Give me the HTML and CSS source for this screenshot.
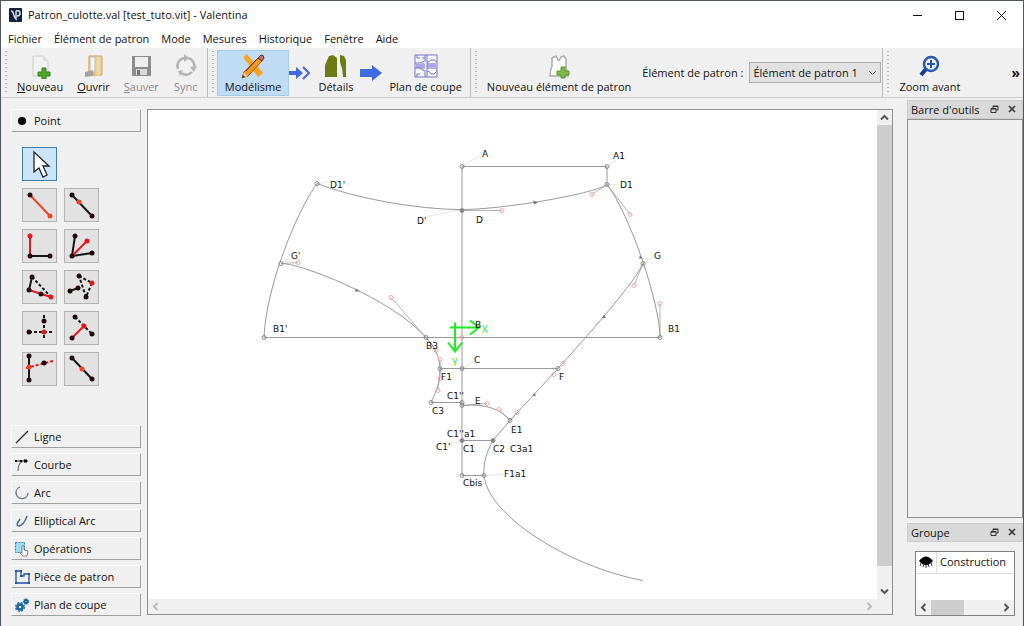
FILE: index.html
```html
<!DOCTYPE html>
<html lang="fr">
<head>
<meta charset="utf-8">
<title>Patron_culotte.val [test_tuto.vit] - Valentina</title>
<link rel="stylesheet" href="styles.css">
</head>
<body class="window">
<header class="titlebar">
  <svg class="app-icon" width="13" height="14" viewBox="0 0 13 14"><rect width="13" height="14" rx="1" fill="#14213d"/><path d="M2 3q2 0 2.500 3t2.500 5V3M7 3q4-1 4 2t-3 3" fill="none" stroke="#dce2ee" stroke-width="1.500"/></svg>
  <h1 class="title">Patron_culotte.val [test_tuto.vit] - Valentina</h1>
  <button class="win-btn" aria-label="Réduire"><svg width="11" height="11"><path d="M1 5.500h9" stroke="#111"/></svg></button>
  <button class="win-btn" aria-label="Agrandir"><svg width="11" height="11"><rect x="1.500" y="1.500" width="8" height="8" fill="none" stroke="#111"/></svg></button>
  <button class="win-btn" aria-label="Fermer"><svg width="11" height="11"><path d="M1 1l9 9M10 1l-9 9" stroke="#111"/></svg></button>
</header>
<nav class="menubar">
  <button>Fichier</button><button>Élément de patron</button><button>Mode</button><button>Mesures</button><button>Historique</button><button>Fenêtre</button><button>Aide</button>
</nav>
<div class="toolbar">
  <div class="group">
    <i class="grip"></i>
    <button class="tool"><svg width="26" height="26" viewBox="0 0 26 26"><path d="M6 3h10l5 5v15H6z" fill="#f1f1f1" stroke="#ccc"/><path d="M16 3v5h5z" fill="#ddd"/><path d="M15 15h4v4h4v4h-4v3h-4v-3h-4v-4h4z" fill="#4fa62b" stroke="#328119"/></svg><span><u>N</u>ouveau</span></button>
    <button class="tool"><svg width="26" height="26" viewBox="0 0 26 26"><path d="M9 3h13v19H9z" fill="#ecd199" stroke="#c9a562"/><path d="M8 4l7 3v17l-7-4z" fill="#e7bd70"/><path d="M10 4h5v15h-5z" fill="#f4f4f4" stroke="#bbb"/><path d="M5 19l8-2v6l-8 1z" fill="#a4a4a4"/><path d="M17 5l3-1v17l-3 3z" fill="#efd8a9"/></svg><span><u>O</u>uvrir</span></button>
    <button class="tool" disabled><svg width="26" height="26" viewBox="0 0 26 26"><path d="M4 3h19v20H4z" fill="#8c8c8c"/><path d="M7 4h13v10H7z" fill="#eee"/><path d="M8 16h11v6H8z" fill="#d9d9d9"/><path d="M9 17h3v5H9z" fill="#777"/></svg><span><u>S</u>auver</span></button>
    <button class="tool" disabled><svg width="26" height="26" viewBox="0 0 26 26"><path d="M5 16A8 8 0 0 1 12 5M15 5a8 8 0 0 1 6 10M19 19a8 8 0 0 1-11 1" fill="none" stroke="#b4b4b4" stroke-width="2.500"/><path d="M11 1l5 4-5 4zM24 13l-3 6-4-5zM10 17l-5 1 2 5z" fill="#b4b4b4"/></svg><span>Sync</span></button>
  </div>
  <div class="group">
    <i class="grip"></i>
    <button class="tool active"><svg width="26" height="26" viewBox="0 0 26 26"><path d="M3 4l4-3 16 19-5 4z" fill="#f6a51c"/><path d="M18 5l4 3L8 23l-6 2 2-6z" fill="#f49a16" stroke="#a85713"/><path d="M6 18L19 4" stroke="#553528" stroke-width="1"/><path d="M4 19l4 4-6 2z" fill="#e9c9a0"/><path d="M2 25l1-3 2 2z" fill="#222"/><path d="M18 5l3-3q3 0 3 3l-2 3z" fill="#d86573" stroke="#553528"/></svg><span>Modélisme</span></button>
    <svg class="step" width="22" height="16" viewBox="0 0 22 16"><path d="M0 6h7V2l7 6-7 6v-4H0z" fill="#4169e1"/><path d="M14 2l6 6-6 6" fill="none" stroke="#4169e1" stroke-width="2"/></svg>
    <button class="tool"><svg width="26" height="26" viewBox="0 0 26 26"><path d="M2 24V12l4-9 4-1 4 3v19zM17 2l4 1 2 4v17h-3q0-8-3-15z" fill="#6c7b16"/></svg><span>Détails</span></button>
    <svg class="step" width="22" height="16" viewBox="0 0 22 16"><path d="M0 4h12V0l10 8-10 8v-4H0z" fill="#4169e1"/></svg>
    <button class="tool"><svg width="26" height="26" viewBox="0 0 26 26"><path d="M2 2h22v22H2z" fill="#f7f7ff" stroke="#7775c5"/><path d="M3 11h5q2-3 4 0v4q-2 3-4 0H3zM14 10h9v4h-9z" fill="#aaa9e8"/><path d="M12 2v7M14 2v22M12 17v7M2 10h5l4-2M2 15h5l4 3M14 9q3 0 4-2h3l3 2M14 15h10M14 18q3 0 4 3h3l3-3M4 2v3h3M9 5h3M4 24v-3h3" fill="none" stroke="#7775c5"/></svg><span>Plan de coupe</span></button>
  </div>
  <div class="group">
    <i class="grip"></i>
    <button class="tool"><svg width="26" height="26" viewBox="0 0 26 26"><path d="M4 23q0-6 2-10V5l4-2 2 4q1 2 3-3l3-1 2 3v9l2 8z" fill="#fff" stroke="#aaa" stroke-width="1.500"/><path d="M15 14h4v4h4v4h-4v3h-4v-3h-4v-4h4z" fill="#83b84a" stroke="#5f962b"/></svg><span>Nouveau élément de patron</span></button>
    <label class="piece-label" for="piece">Élément de patron :</label>
    <span class="select-wrap"><select id="piece"><option>Élément de patron 1</option></select><svg width="9" height="6"><path d="M1 1l3.500 3.500L8 1" fill="none" stroke="#666"/></svg></span>
  </div>
  <div class="group last">
    <i class="grip"></i>
    <button class="tool"><svg width="26" height="26" viewBox="0 0 26 26"><path d="M9 16l-5 6" stroke="#163b8c" stroke-width="4"/><circle cx="14" cy="11" r="7" fill="#eef5ff" stroke="#2555ad" stroke-width="2.500"/><path d="M14 7v8M10 11h8" stroke="#2555ad" stroke-width="2"/></svg><span>Zoom avant</span></button>
    <button class="more" aria-label="Plus">»</button>
  </div>
</div>
<main class="workspace">
  <aside class="palette">
    <button class="section"><svg width="16" height="16"><circle cx="8" cy="8" r="4" fill="#000"/></svg>Point</button>
    <div class="tools">
      <button class="cell picked" aria-label="Sélection"><svg width="32" height="32"><path d="M10 4v20l5-4 4 9 4-2-4-9h6z" fill="#fff" stroke="#222" stroke-width="1.300"/></svg></button>
      <button class="cell row-start" aria-label="Point à distance"><svg width="32" height="32"><path d="M6 6l20 21" class="r o"/><circle cx="6" cy="6" r="2.500"/><circle cx="26" cy="27" r="2.500" class="o"/></svg></button>
      <button class="cell" aria-label="Point sur ligne"><svg width="32" height="32"><path d="M6 6l20 21" class="k"/><circle cx="6" cy="6" r="2.500"/><circle cx="26" cy="27" r="2.500"/><circle cx="13" cy="13" r="2.500" class="o"/></svg></button>
      <button class="cell" aria-label="Perpendiculaire"><svg width="32" height="32"><path d="M6 26V6" class="r"/><path d="M6 26h20" class="k"/><circle cx="6" cy="6" r="2.500" class="d"/><circle cx="6" cy="26" r="2.500"/><circle cx="26" cy="26" r="2.500"/></svg></button>
      <button class="cell" aria-label="Bissectrice"><svg width="32" height="32"><path d="M9 6L6 26l20-3" class="k"/><path d="M6 26l15-15" class="r"/><circle cx="9" cy="6" r="2.500"/><circle cx="6" cy="26" r="2.500"/><circle cx="26" cy="23" r="2.500"/><circle cx="21" cy="11" r="2.500" class="d"/></svg></button>
      <button class="cell" aria-label="Épaule"><svg width="32" height="32"><path d="M8 6L5 19" class="k"/><path d="M5 19l22 7" class="r"/><path d="M8 6l19 20" class="k dash"/><circle cx="8" cy="6" r="2.500"/><circle cx="5" cy="19" r="2.500"/><circle cx="17" cy="23" r="2.500"/><circle cx="27" cy="26" r="2.500" class="d"/></svg></button>
      <button class="cell" aria-label="Triangle"><svg width="32" height="32"><path d="M4 20l8-3" class="k"/><path d="M13 5l13 7-6 14z" class="k dash"/><circle cx="4" cy="20" r="2.500"/><circle cx="12" cy="17" r="2.500"/><circle cx="13" cy="5" r="2.500"/><circle cx="20" cy="26" r="2.500"/><circle cx="26" cy="12" r="2.500" class="d"/></svg></button>
      <button class="cell" aria-label="Intersection XY"><svg width="32" height="32"><path d="M5 20h23M20 3v24" class="k dash"/><circle cx="20" cy="9" r="2.500"/><circle cx="5" cy="20" r="2.500"/><circle cx="20" cy="20" r="2.500" class="d"/></svg></button>
      <button class="cell" aria-label="Hauteur"><svg width="32" height="32"><path d="M9 5l17 17" class="k dash"/><path d="M6 26l12-12" class="r"/><circle cx="9" cy="5" r="2.500"/><circle cx="6" cy="26" r="2.500"/><circle cx="26" cy="22" r="2.500"/><circle cx="18" cy="14" r="2.500" class="d"/></svg></button>
      <button class="cell" aria-label="Intersection avec axe"><svg width="32" height="32"><path d="M5 3v24" class="k"/><path d="M2 15l27-7" class="r dash"/><circle cx="5" cy="3" r="2.500"/><circle cx="5" cy="27" r="2.500"/><circle cx="20" cy="10" r="2.500"/><circle cx="5" cy="14" r="2.500" class="o"/></svg></button>
      <button class="cell" aria-label="Milieu"><svg width="32" height="32"><path d="M6 5l20 21" class="k"/><circle cx="6" cy="5" r="2.500"/><circle cx="26" cy="26" r="2.500"/><circle cx="16" cy="16" r="2.500" class="o"/></svg></button>
    </div>
    <div class="sections">
      <button class="section"><svg width="16" height="16"><path d="M2 14L14 2" stroke="#222" stroke-width="1.300"/></svg>Ligne</button>
      <button class="section"><svg width="16" height="16"><path d="M1 4h13" stroke="#111"/><path d="M4 14q0-8 5-10" fill="none" stroke="#667" stroke-width="1.200"/><path d="M1 3h2v2H1zM10 2.500h3v3h-3zM6 3h2v2H6z"/></svg>Courbe</button>
      <button class="section"><svg width="16" height="16"><path d="M6 2a6 6 0 1 0 8 6" fill="none" stroke="#667085" stroke-width="1.300"/></svg>Arc</button>
      <button class="section"><svg width="16" height="16"><path d="M6 6q-5 7-1 7 5-1 8-10" fill="none" stroke="#53699a" stroke-width="1.500"/></svg>Elliptical Arc</button>
      <button class="section"><svg width="16" height="16"><rect x="1.500" y="1.500" width="9" height="10" fill="#9ddcf2" stroke="#38a" stroke-dasharray="2 1"/><path d="M8 5v7l-1-1-1 1 3 3h4l1-5-4-1V5z" fill="#fff" stroke="#666" stroke-width=".8"/></svg>Opérations</button>
      <button class="section"><svg width="16" height="16"><path d="M2 2h5v5h3V5h5v9H2z" fill="#eef4ff" stroke="#234d9d" stroke-width="1.300"/><path d="M1 1h2v2H1zM6 1h2v2H6zM6 6h2v2H6zM14 4h2v2h-2zM14 13h2v2h-2zM1 13h2v2H1z" fill="#234d9d"/></svg>Pièce de patron</button>
      <button class="section"><svg width="16" height="16"><circle cx="6" cy="10" r="2.500" fill="none" stroke="#17659a" stroke-width="2.500"/><circle cx="6" cy="10" r="4.300" fill="none" stroke="#17659a" stroke-width="1.300" stroke-dasharray="2 1.400"/><circle cx="12" cy="4.500" r="1.500" fill="none" stroke="#17659a" stroke-width="2"/><circle cx="12" cy="4.500" r="2.800" fill="none" stroke="#17659a" stroke-dasharray="1.500 1"/></svg>Plan de coupe</button>
    </div>
  </aside>
  <section class="canvas">
    <svg class="drawing" viewBox="148 110 729 488" preserveAspectRatio="xMidYMid meet">
      <g class="leader"><path d="M462 166l18-11M607 166l9-7M607 184h12M317 183l11-1M281 263l8-6M264 337l7-7M462 209l-35 7M643 263l9-6M660 337l7-7M462 368l11-7M462 440l-14 4M484 475l20-1"/></g>
      <g class="handle"><path d="M462 210h40M607 184l-15 10M607 184l23 30M643 263l-9 22M660 337v-34M281 263l17-1M426 337l-35-40M426 337l10 13M440 368v-9M440 368l-2 22M462 405l25-2M510 420l-11-11M510 420l7-8"/></g>
      <g class="geom"><path d="M462 166v309M462 166h145v18M264 337h396M440 368h118M431 402h31M462 440h31M462 475h22"/>
      <path d="M317 183C353 197 415 209 462 209C502 209 592 194 607 184C630 214 660 303 660 337"/>
      <path d="M317 183C296 212 266 287 264 337M281 263C298 262 391 297 426 337C434 345 440 357 440 368C441 380 436 391 431 402"/>
      <path d="M643 263C634 285 563 362 558 368L510 420L493 440C487 450 483 463 484 475C488 515 568 566 643 580"/>
      <path d="M462 405C485 403 500 408 510 420"/></g>
      <g class="arrow"><path d="M538 202l-5-2 1 4zM643 258l-3-3-1 3zM602 318l4-1-2-3zM360 291l-4-3-1 3zM533 396l3-1-2-3z"/></g>
      <g class="node"><circle cx="462" cy="166" r="2"/><circle cx="607" cy="166" r="2"/><circle cx="607" cy="184" r="2"/><circle cx="317" cy="183" r="2"/><circle cx="281" cy="263" r="2"/><circle cx="264" cy="337" r="2"/><circle cx="426" cy="337" r="2"/><circle cx="462" cy="210" r="2" class="solid"/><circle cx="643" cy="263" r="2"/><circle cx="660" cy="337" r="2"/><circle cx="440" cy="368" r="2"/><circle cx="462" cy="368" r="2"/><circle cx="558" cy="368" r="2"/><circle cx="431" cy="402" r="2"/><circle cx="462" cy="402" r="2"/><circle cx="462" cy="405" r="2"/><circle cx="510" cy="420" r="2"/><circle cx="462" cy="440" r="2" class="solid"/><circle cx="493" cy="440" r="2" class="solid"/><circle cx="462" cy="475" r="2"/><circle cx="484" cy="475" r="2"/></g>
      <g class="control"><circle cx="462" cy="337" r="2"/><circle cx="502" cy="210" r="2"/><circle cx="592" cy="194" r="2"/><circle cx="630" cy="214" r="2"/><circle cx="634" cy="285" r="2"/><circle cx="660" cy="303" r="2"/><circle cx="298" cy="262" r="2"/><circle cx="391" cy="297" r="2"/><circle cx="436" cy="350" r="2"/><circle cx="440" cy="359" r="2"/><circle cx="440" cy="378" r="2"/><circle cx="438" cy="390" r="2"/><circle cx="563" cy="363" r="2"/><circle cx="554" cy="374" r="2"/><circle cx="487" cy="403" r="2"/><circle cx="499" cy="409" r="2"/><circle cx="517" cy="412" r="2"/></g>
      <g class="axes"><path d="M450 327h29M470 320l9 7-9 7M455 322v29M448 342l7 9 7-9"/><text x="482" y="332">X</text><text x="452" y="365">Y</text></g>
      <g class="names"><text x="482" y="156">A</text><text x="613" y="158">A1</text><text x="620" y="187">D1</text><text x="330" y="187">D1'</text><text x="476" y="222">D</text><text x="417" y="223">D'</text><text x="291" y="258">G'</text><text x="654" y="258">G</text><text x="273" y="331">B1'</text><text x="668" y="331">B1</text><text x="475" y="327">B</text><text x="426" y="348">B3</text><text x="474" y="362">C</text><text x="441" y="379">F1</text><text x="559" y="379">F</text><text x="447" y="398">C1''</text><text x="475" y="403">E</text><text x="432" y="413">C3</text><text x="447" y="436">C1''a1</text><text x="511" y="432">E1</text><text x="436" y="449">C1'</text><text x="463" y="451">C1</text><text x="493" y="451">C2</text><text x="510" y="451">C3a1</text><text x="504" y="476">F1a1</text><text x="463" y="485">Cbis</text></g>
    </svg>
    <div class="vscroll"><button aria-label="Défiler vers le haut"><svg width="9" height="7"><path d="M1 5.500l3.500-3.500L8 5.500"/></svg></button><div class="track"><div class="thumb"></div></div><button aria-label="Défiler vers le bas"><svg width="9" height="7"><path d="M1 1.500L4.500 5 8 1.500"/></svg></button></div>
    <div class="hscroll off"><button aria-label="Défiler à gauche"><svg width="7" height="9"><path d="M5.500 1L2 4.500 5.500 8"/></svg></button><div class="track"></div><button aria-label="Défiler à droite"><svg width="7" height="9"><path d="M1.500 1L5 4.500 1.500 8"/></svg></button></div>
  </section>
  <aside class="docks">
    <section class="dock grow">
      <header class="dock-title"><h2>Barre d'outils</h2><button aria-label="Détacher"><svg width="9" height="9"><path d="M3 3V1h5v4H6M1 3.500h5v4H1zM3 1.500h5M1 4h5" fill="none" stroke="#333"/></svg></button><button aria-label="Fermer"><svg width="9" height="9"><path d="M1 1l6 6M7 1L1 7" stroke="#333" stroke-width="1.600"/></svg></button></header>
      <div class="dock-body"></div>
    </section>
    <section class="dock">
      <header class="dock-title"><h2>Groupe</h2><button aria-label="Détacher"><svg width="9" height="9"><path d="M3 3V1h5v4H6M1 3.500h5v4H1zM3 1.500h5M1 4h5" fill="none" stroke="#333"/></svg></button><button aria-label="Fermer"><svg width="9" height="9"><path d="M1 1l6 6M7 1L1 7" stroke="#333" stroke-width="1.600"/></svg></button></header>
      <div class="list">
        <table><tr><td class="eye"><svg width="14" height="13"><path d="M0 5q7-9 14 0-7 8-14 0z"/><path d="M2 7l-1 3M5 8l-1 3M7 9v3M9 8l1 3M12 7l1 3" stroke="#000" stroke-width=".8"/></svg></td><td>Construction</td></tr></table>
        <div class="hscroll"><button aria-label="Défiler à gauche"><svg width="7" height="9"><path d="M5.500 1L2 4.500 5.500 8"/></svg></button><div class="track"><div class="thumb"></div></div><button aria-label="Défiler à droite"><svg width="7" height="9"><path d="M1.500 1L5 4.500 1.500 8"/></svg></button></div>
      </div>
    </section>
  </aside>
</main>
</body>
</html>
```
FILE: styles.css
```css
* { box-sizing: border-box; }
button, select { font: inherit; color: inherit; }
button { border: 0; padding: 0; background: none; }
svg { display: block; flex: none; }
.window {
  margin: 0;
  height: 100vh;
  display: flex;
  flex-direction: column;
  overflow: hidden;
  background: #f0f0f0;
  border: 1px solid #4d5661;
  border-bottom: 0;
  color: #111;
  font: 11px/16px "Open Sans", sans-serif;
}
.titlebar { display: flex; align-items: center; height: 28px; flex: none; background: #fff; padding: 0 1px 0 8px; }
.title { flex: 1; margin: 0 0 0 6px; font: inherit; }
.win-btn { width: 42px; height: 26px; display: grid; place-items: center; }
.menubar { display: flex; flex: none; gap: 12px; height: 19px; padding: 0 7px; background: #fff; }
.toolbar { display: flex; flex: none; height: 50px; border-bottom: 1px solid #ccc; }
.group { display: flex; flex: none; align-items: center; padding: 1px 1px 1px 4px; border-right: 1px solid #bbb; }
.group.last { flex: 1; border: 0; }
.grip { width: 2px; height: 44px; margin-right: 3px; background: repeating-linear-gradient(#b4b4b4 0 1px, transparent 1px 4px); }
.tool { height: 46px; padding: 0 7px 1px; display: flex; flex-direction: column; align-items: center; justify-content: flex-end; white-space: nowrap; }
.tool:disabled { color: #8c8c8c; }
.tool.active { background: #bfdcf4; border: 1px solid #a5cdeb; padding-bottom: 0; }
.piece-label { margin: 0 6px 0 4px; }
.select-wrap { display: grid; align-items: center; }
.select-wrap > * { grid-area: 1 / 1; }
.select-wrap svg { justify-self: end; margin-right: 4px; }
select { appearance: none; height: 21px; padding: 0 22px 0 3px; border: 1px solid #adadad; border-radius: 0; background: #e1e1e1; }
.more { margin-left: auto; padding-right: 2px; font-size: 14px; font-weight: 700; }
.workspace { display: flex; flex: 1; min-height: 0; }
.palette { width: 146px; flex: none; display: flex; flex-direction: column; padding: 11px 6px 10px 10px; }
.section { width: 100%; height: 23px; display: flex; align-items: center; gap: 4px; padding-left: 2px; border: 1px solid #fafafa; border-right-color: #a0a0a0; border-bottom-color: #a0a0a0; }
.tools { display: grid; grid-template-columns: 35px 35px; gap: 7px; padding: 15px 11px; }
.cell { height: 34px; display: grid; place-items: center; border: 1px solid #b4b4b4; background: #e2e2e2; }
.picked { background: #cce4f7; border-color: #3d7eab; }
.row-start { grid-column: 1; }
.cell circle { fill: #1d0a0a; }
.cell .d { fill: #e3181e; }
.cell circle.o { fill: #f04423; }
.k, .r { fill: none; stroke: #161616; stroke-width: 2; }
.r { stroke: #e3181e; }
.r.o { stroke: #f04423; }
.dash { stroke-dasharray: 3 2; }
.sections { margin-top: auto; display: grid; gap: 5px; }
.canvas { flex: 1; min-width: 0; display: grid; grid-template: minmax(0, 1fr) 15px / minmax(0, 1fr) 15px; margin: 11px 0; border: 1px solid #909090; }
.drawing { width: 100%; height: 100%; background: #fff; }
.leader path { fill: none; stroke: #e6e6e6; }
.geom path { fill: none; stroke: #999; }
.handle path { fill: none; stroke: #b4b4b4; }
.arrow path { fill: #777; }
.node circle { fill: none; stroke: #888; }
.node .solid { fill: #888; }
.control circle { fill: none; stroke: #f0a5a5; }
.axes path { fill: none; stroke: #1fec1f; stroke-width: 2; }
.axes text { fill: #1fec1f; font-size: 10px; }
.names text { font: 9px "DejaVu Sans", sans-serif; fill: #111; }
.vscroll, .hscroll { display: flex; background: #f0f0f0; }
.vscroll { flex-direction: column; }
.hscroll { height: 15px; }
.vscroll button, .hscroll button { display: grid; place-items: center; flex: none; width: 15px; height: 15px; }
.vscroll path, .hscroll path { fill: none; stroke: #555; stroke-width: 2; }
.hscroll.off path { stroke: #bbb; }
.track { flex: 1; min-width: 0; min-height: 0; }
.thumb { background: #cdcdcd; }
.vscroll .thumb { height: 96%; }
.hscroll .thumb { width: 48%; height: 100%; }
.docks { width: 116px; flex: none; margin-left: 14px; display: flex; flex-direction: column; gap: 5px; padding: 2px 0 10px; }
.dock { display: flex; flex-direction: column; }
.grow { flex: 1; }
.dock-title { display: flex; align-items: center; height: 19px; padding: 0 5px 0 3px; gap: 9px; background: #d9d9d9; border: 1px solid #ccc; }
.dock-title h2 { flex: 1; margin: 0; font: inherit; white-space: nowrap; }
.dock-body { flex: 1; border: 1px solid #909090; }
.list { margin: 9px 8px 0; height: 65px; display: flex; flex-direction: column; justify-content: space-between; border: 1px solid #828282; background: #fff; overflow: hidden; }
.list table { width: 100%; border-collapse: collapse; font: inherit; }
.list td { height: 21px; padding: 0 3px; border-bottom: 1px solid #ddd; white-space: nowrap; }
.list .eye { width: 20px; border-right: 1px solid #ddd; }
```
